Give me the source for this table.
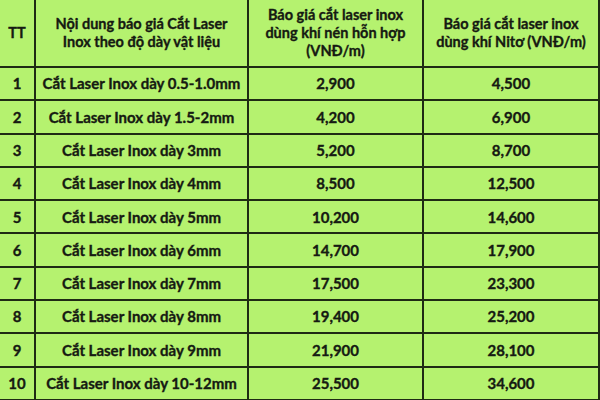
const rows = [
  ["1", "Cắt Laser Inox dày 0.5-1.0mm", "2,900", "4,500"],
  ["2", "Cắt Laser Inox dày 1.5-2mm", "4,200", "6,900"],
  ["3", "Cắt Laser Inox dày 3mm", "5,200", "8,700"],
  ["4", "Cắt Laser Inox dày 4mm", "8,500", "12,500"],
  ["5", "Cắt Laser Inox dày 5mm", "10,200", "14,600"],
  ["6", "Cắt Laser Inox dày 6mm", "14,700", "17,900"],
  ["7", "Cắt Laser Inox dày 7mm", "17,500", "23,300"],
  ["8", "Cắt Laser Inox dày 8mm", "19,400", "25,200"],
  ["9", "Cắt Laser Inox dày 9mm", "21,900", "28,100"],
  ["10", "Cắt Laser Inox dày 10-12mm", "25,500", "34,600"],
]

const cols = "grid grid-cols-[36px_213px_175px_176px]"
const cell = "flex items-center justify-center text-center whitespace-nowrap border-r-2 border-b-2 border-[#1f2a14]"

const App = () => {
  return (
    <div
      className="w-[600px] h-[400px] overflow-hidden bg-[#b5f26f] text-[#161a12] font-bold [-webkit-text-stroke:0.35px_#161a12]"
      style={{ fontFamily: 'Lato, sans-serif' }}
    >
      <div className={`${cols} h-[68px] text-[14.5px] leading-[18px]`}>
        <div className={cell}>TT</div>
        <div className={cell}>
          Nội dung báo giá Cắt Laser
          <br />
          Inox theo độ dày vật liệu
        </div>
        <div className={cell}>
          Báo giá cắt laser inox
          <br />
          dùng khí nén hỗn hợp
          <br />
          (VNĐ/m)
        </div>
        <div className={cell}>
          Báo giá cắt laser inox
          <br />
          dùng khí Nitơ (VNĐ/m)
        </div>
      </div>
      {rows.map((r) => (
        <div key={r[0]} className={`${cols} h-[33.3px] text-[15px]`}>
          <div className={cell}>{r[0]}</div>
          <div className={cell}>{r[1]}</div>
          <div className={cell}>{r[2]}</div>
          <div className={cell}>{r[3]}</div>
        </div>
      ))}
    </div>
  )
}

export default App
